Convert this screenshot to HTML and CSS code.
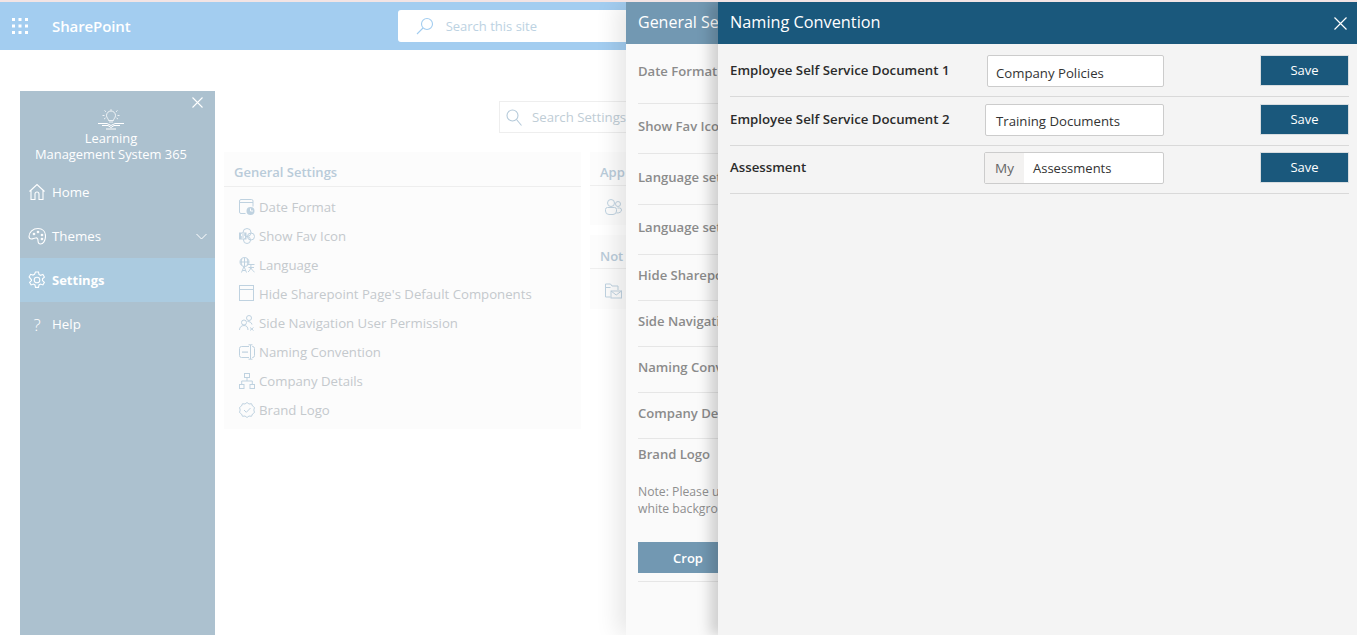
FILE: index.html
```html
<!DOCTYPE html>
<html lang="en">
<head>
<meta charset="utf-8">
<title>Naming Convention</title>
<link rel="stylesheet" href="styles.css">
</head>
<body>
<header class="suite">
  <svg class="waffle" width="16" height="16" viewBox="0 0 16 16" fill="#fff"><rect x="0" y="0" width="3" height="3"/><rect x="6.500" y="0" width="3" height="3"/><rect x="13" y="0" width="3" height="3"/><rect x="0" y="6.500" width="3" height="3"/><rect x="6.500" y="6.500" width="3" height="3"/><rect x="13" y="6.500" width="3" height="3"/><rect x="0" y="13" width="3" height="3"/><rect x="6.500" y="13" width="3" height="3"/><rect x="13" y="13" width="3" height="3"/></svg>
  <span class="brand">SharePoint</span>
  <div class="sitesearch">
    <svg width="18" height="18" viewBox="0 0 18 18" fill="none" stroke="#a3cdf0" stroke-width="1.100"><circle cx="11" cy="7" r="5.500"/><path d="M7 11L1 17"/></svg>
    <span>Search this site</span>
  </div>
</header>

<main class="page">
  <nav class="sidenav">
    <svg class="navclose" width="11" height="11" viewBox="0 0 11 11" stroke="#fff" stroke-width="1.100"><path d="M.5.500l10 10M10.500.500l-10 10"/></svg>
    <div class="logo">
      <svg width="28" height="21" viewBox="0 0 28 21" fill="none" stroke="#fff" stroke-width=".8"><path d="M11.500 11.500c0-2-2-2.500-2-5a4.500 4.500 0 0 1 9 0c0 2.500-2 3-2 5zM12 13h4M14 .2v1.500M7.500 1.500l1.500 1.300M20.500 1.500L19 2.800M5.500 6.500h2M20.500 6.500h2M7 10l1.500-1M21 10l-1.500-1"/><path stroke-width="1" d="M1 14.500h9l4 2 4-2h9M5 16.500h6l3 2 3-2h6M9 20h10"/></svg>
      <span>Learning</span>
      <span>Management System 365</span>
    </div>
    <a class="navitem">
      <svg width="18" height="18" viewBox="0 0 18 18" fill="none" stroke="#fff" stroke-width="1.100"><path d="M1.500 8.500L9 1.500l7.500 7M3 7.500V16.500h4V11a2 2 0 0 1 4 0v5.500h4V7.500"/></svg>
      <span>Home</span>
    </a>
    <a class="navitem">
      <svg width="18" height="18" viewBox="0 0 18 18" fill="none" stroke="#fff" stroke-width="1.100"><path d="M1 9.500C1 5 5 1.500 10 1.500c4.500 0 7.500 3 7.500 7.500 0 5-2.500 8-5 8-2 0-2.500-1.500-2.500-3.500 0-2-1-3-2.500-2.500C6 11 5 12 3.500 12 2 12 1 11 1 9.500z"/><circle cx="6" cy="7" r=".8"/><circle cx="10" cy="5" r=".8"/><circle cx="14" cy="8" r=".8"/><circle cx="14" cy="12" r=".8"/></svg>
      <span>Themes</span>
      <svg class="chev" width="11" height="7" viewBox="0 0 11 7" fill="none" stroke="#fff" stroke-width="1"><path d="M.5 1l5 5 5-5"/></svg>
    </a>
    <a class="navitem active">
      <svg width="18" height="18" viewBox="0 0 18 18" fill="none" stroke="#fff" stroke-width="1.100"><circle cx="9" cy="9" r="2.800"/><path d="M7.500 1h3l.5 2.500 1.500.8 2.400-.8 1.500 2.600-1.900 1.700v1.800l1.900 1.700-1.500 2.600-2.400-.8-1.500.8-.5 2.500h-3l-.5-2.500-1.500-.8-2.400.8-1.500-2.600 1.900-1.700V8.800L1.100 5.900l1.500-2.600 2.400.8 1.500-.8z"/></svg>
      <span>Settings</span>
    </a>
    <a class="navitem">
      <span class="helpmark">?</span>
      <span>Help</span>
    </a>
  </nav>

  <section class="content">
    <div class="searchrow">
      <div class="settingsearch">
        <svg width="16" height="17" viewBox="0 0 16 17" fill="none" stroke="#b5cada" stroke-width="1.100"><circle cx="6.500" cy="6.500" r="5.500"/><path d="M10.500 10.500l5 6"/></svg>
        <span>Search Settings</span>
      </div>
    </div>
    <div class="cards">
      <div class="card general">
        <h3>General Settings</h3>
        <ul>
          <li><svg class="ic" width="16" height="16" viewBox="0 0 16 16"><path d="M6.500 14.500H2a1.500 1.500 0 0 1-1.500-1.500V2A1.500 1.500 0 0 1 2 .5h10.500A1.500 1.500 0 0 1 14 2v5.500M.5 3.500H14"/><circle class="solid" cx="11.500" cy="12" r="4"/><path class="cut" d="M11.500 9.500V12h2.500"/></svg><span>Date Format</span></li>
          <li><svg class="ic" width="16" height="16" viewBox="0 0 16 16"><circle cx="8" cy="4.500" r="4"/><circle cx="12" cy="8.500" r="3.500"/><circle cx="8" cy="12" r="3.500"/><rect class="solid" x="0" y="4.500" width="7.500" height="7"/><path class="cut" d="M5.500 6H2.500v2h3v2h-3"/></svg><span>Show Fav Icon</span></li>
          <li><svg class="ic" width="16" height="16" viewBox="0 0 16 16"><circle cx="5.500" cy="5" r="4.500"/><path d="M1 5h9M5.500.5v9M3 1.500c-1 2-1 5 0 7M8 1.500c1 2 1 5 0 7M2.500 15.500l2.500-6 2.500 6M3.500 13.500h3M9 7.500h6.500M12 7.500c0 4-1 6-3 7.500M12 11c1 2 2 3 3.500 4M9.500 10.500h5.500"/></svg><span>Language</span></li>
          <li><svg class="ic" width="16" height="17" viewBox="0 0 16 17"><rect x=".5" y=".5" width="14" height="15"/><path d="M.5 4.500h14"/></svg><span>Hide Sharepoint Page's Default Components</span></li>
          <li><svg class="ic" width="16" height="16" viewBox="0 0 16 16"><circle cx="10" cy="3" r="2.500"/><circle cx="5" cy="7.500" r="2.500"/><path d="M.5 15c0-3 2-4.500 4.500-4.500S9 12 9 15M8.500 6.500c1.500 0 4 .5 4.500 3M11 12.500l3.500 3M14.500 12.500l-3.500 3"/></svg><span>Side Navigation User Permission</span></li>
          <li><svg class="ic" width="16" height="16" viewBox="0 0 16 16"><path d="M10 2.500H2.500a2 2 0 0 0-2 2v7a2 2 0 0 0 2 2H10M13 2.500h.5a2 2 0 0 1 2 2v7a2 2 0 0 1-2 2H13M11.500 1v14M9.500 .8h4M9.500 15.200h4"/><rect class="solid" x="3" y="7.500" width="6" height="1.200"/></svg><span>Naming Convention</span></li>
          <li><svg class="ic" width="16" height="16" viewBox="0 0 16 16"><rect x="5.500" y=".5" width="5" height="4"/><rect x=".5" y="11.500" width="4.500" height="4"/><rect x="11" y="11.500" width="4.500" height="4"/><path d="M8 4.500v3.500M2.700 11.500V8h10.600v3.500"/></svg><span>Company Details</span></li>
          <li><svg class="ic" width="16" height="16" viewBox="0 0 16 16"><path d="M8 .5l2 1.500 2.500-.3 1 2.300 2 1.500-.7 2.500.7 2.500-2 1.500-1 2.300-2.500-.3L8 15.500 6 14l-2.500.3-1-2.300-2-1.500L1.200 8 .5 5.500l2-1.500 1-2.300L6 2z"/><path d="M5 8l2.300 2.300L11.500 6"/></svg><span>Brand Logo</span></li>
        </ul>
      </div>
      <div class="sidecol">
        <div class="card narrow n1">
          <h3>App</h3>
          <ul><li><svg class="ic" width="17" height="16" viewBox="0 0 17 16"><circle cx="6" cy="4" r="3.500"/><circle cx="13" cy="5" r="2.500"/><path d="M.5 12v-1.500a2 2 0 0 1 2-2h7a2 2 0 0 1 2 2V12a3.500 3.500 0 0 1-3.500 3.500H4A3.500 3.500 0 0 1 .5 12zM12.500 9h2a2 2 0 0 1 2 2c0 2-2 3-5 3"/></svg></li></ul>
        </div>
        <div class="card narrow n2">
          <h3>Not</h3>
          <ul><li><svg class="ic" width="17" height="16" viewBox="0 0 17 16"><path d="M5.500 14H.5V1h5l1.500 2h6v4M.5 4.500h5"/><rect x="6" y="8" width="10.500" height="7"/><path d="M6 8l5.200 4L16.500 8"/></svg></li></ul>
        </div>
      </div>
    </div>
  </section>
</main>

<aside class="panel first">
  <div class="panelhead"><span>General Settings</span></div>
  <div class="panelbody">
    <div class="prow r1">Date Format</div>
    <div class="prow r2">Show Fav Icon</div>
    <div class="prow r2b">Language settings</div>
    <div class="prow r2">Language settings</div>
    <div class="prow r3">Hide Sharepoint Page's</div>
    <div class="prow r3">Side Navigation</div>
    <div class="prow r3">Naming Convention</div>
    <div class="prow r3">Company Details</div>
    <div class="prow last">Brand Logo</div>
    <p class="note">Note: Please upload the logo on a<br>white background</p>
    <div class="cropwrap"><button class="crop">Crop</button></div>
  </div>
</aside>

<aside class="panel second">
  <div class="head2">
    <span>Naming Convention</span>
    <svg width="13" height="13" viewBox="0 0 13 13" stroke="#fff" stroke-width="1.200"><path d="M.5.500l12 12M12.500.500l-12 12"/></svg>
  </div>
  <div class="formbody">
    <div class="frow">
      <label>Employee Self Service Document 1</label>
      <div class="field w1"><span class="val v1">Company Policies</span></div>
      <button class="save">Save</button>
    </div>
    <div class="frow mid">
      <label>Employee Self Service Document 2</label>
      <div class="field w2"><span class="val v2">Training Documents</span></div>
      <button class="save">Save</button>
    </div>
    <div class="frow">
      <label>Assessment</label>
      <div class="field w3"><span class="prefix">My</span><span class="val">Assessments</span></div>
      <button class="save">Save</button>
    </div>
  </div>
</aside>
</body>
</html>
```

FILE: styles.css
```css
* { box-sizing: border-box; }
html, body { margin: 0; height: 100%; overflow: hidden; }
body {
  position: relative;
  width: 1357px;
  height: 635px;
  background: #fff;
  font-family: "Open Sans", "Noto Sans", "Liberation Sans", sans-serif;
  color: #333;
  border-top: 2px solid #f3e4e4;
}
ul { list-style: none; margin: 0; padding: 0; }
h3 { margin: 0; }

.suite {
  height: 48px;
  background: #a3cdf0;
  display: flex;
  align-items: center;
  color: #fff;
}
.waffle { margin-left: 12px; margin-top: -1px; }
.brand { margin-left: 24px; font-size: 15px; font-weight: 600; letter-spacing: -.1px; }
.sitesearch {
  margin-left: 267px;
  width: 290px;
  height: 32px;
  background: #fff;
  border-radius: 3px;
  display: flex;
  align-items: center;
  padding-left: 18px;
  gap: 12px;
  font-size: 13px;
  color: #bcd2e2;
}

.page {
  display: flex;
  padding: 41px 0 0 20px;
  height: 585px;
}
.sidenav {
  position: relative;
  width: 195px;
  background: #acc1cf;
  color: #fff;
  font-size: 13.3px;
  display: flex;
  flex-direction: column;
}
.navclose { position: absolute; top: 6px; right: 12px; }
.logo {
  display: flex;
  flex-direction: column;
  align-items: center;
  padding: 18px 13px 0 0;
  height: 79px;
  font-size: 12.9px;
  line-height: 16px;
  text-align: center;
}
.navitem {
  height: 44px;
  display: flex;
  align-items: center;
  padding-left: 8px;
  gap: 6px;
  position: relative;
}
.navitem.active { background: #abcbe0; font-weight: 700; font-size: 13px; }
.navitem svg:first-child { flex: none; }
.chev { position: absolute; right: 8px; top: 19px; }
.helpmark { width: 18px; text-align: center; font-size: 17px; font-weight: 300; }

.content { margin-left: 9px; flex: 1; }
.searchrow { padding: 10px 0 0 275px; height: 61px; }
.settingsearch {
  width: 160px;
  height: 32px;
  border: 1px solid #eee;
  display: flex;
  align-items: center;
  padding-left: 6px;
  gap: 10px;
  font-size: 13.2px;
  color: #c0cdd6;
  white-space: nowrap;
}
.cards { display: flex; gap: 9px; }
.card { background: #fcfcfc; }
.card h3 {
  font-size: 13px;
  font-weight: 600;
  color: #b9cbd9;
  padding: 11px 0 0 10px;
  height: 34px;
  border-bottom: 1px solid #eeeeee;
}
.general { width: 357px; height: 277px; }
.general h3 { height: 35px; }
.general ul { padding: 5px 0 0 15px; }
.general li {
  height: 29px;
  display: flex;
  align-items: center;
  gap: 4px;
  font-size: 13.2px;
  color: #c4c9cd;
  white-space: nowrap;
}
.ic { flex: none; fill: none; stroke: #bfd2e0; stroke-width: 1; }
.ic .solid { fill: #bfd2e0; stroke: none; }
.ic .cut { stroke: #fcfcfc; }
.sidecol { display: flex; flex-direction: column; gap: 10px; }
.narrow { width: 80px; }
.n1 { height: 73px; }
.n2 { height: 74px; }
.n1 ul { padding: 12px 0 0 15px; }
.n2 ul { padding: 13px 0 0 15px; }
.n2 h3 { padding-top: 12px; }

.panel { position: absolute; top: 0; bottom: 0; }
.first {
  left: 626px;
  width: 92px;
  overflow: hidden;
  background: #fafafa;
  box-shadow: -8px 0 22px rgba(0,0,0,.1);
}
.panelhead {
  height: 42px;
  background: #7298b2;
  color: #fff;
  font-size: 16px;
  padding: 9px 0 0 12px;
  white-space: nowrap;
}
.panelbody { padding: 0 12px; color: #8b8b8b; font-size: 13.1px; font-weight: 600; white-space: nowrap; }
.prow { border-bottom: 1px solid #e6e6e6; width: 88px; }
.r1 { height: 60px; padding-top: 18px; }
.r2 { height: 50px; padding-top: 13px; }
.r2b { height: 51px; padding-top: 14px; }
.r3 { height: 46px; padding-top: 11px; }
.last { border: 0; padding-top: 6px; }
.note { margin: 20px 0 0; font-size: 12.2px; font-weight: 400; line-height: 17px; color: #8f8f8f; }
.cropwrap { margin-top: 25px; border-bottom: 1px solid #e6e6e6; width: 600px; height: 40px; }
.crop {
  display: block;
  width: 100px;
  height: 31px;
  border: 0;
  background: #7298b2;
  color: #fff;
  font: 600 13px "Open Sans", sans-serif;
}

.second {
  left: 718px;
  right: 0;
  background: #f4f4f4;
  box-shadow: -8px 0 12px rgba(0,0,0,.17);
}
.head2 {
  height: 42px;
  background: #1a587c;
  color: #fff;
  font-size: 16.3px;
  display: flex;
  align-items: center;
  justify-content: space-between;
  padding: 0 10px 2px 12px;
}
.head2 svg { margin-top: 2px; }
.formbody { padding: 4.5px 8px 0 12px; }
.frow {
  position: relative;
  height: 48.5px;
  border-bottom: 1px solid #d9d9d9;
  display: flex;
  align-items: center;
  font-size: 13.25px;
}
label { font-weight: 600; color: #2b2b2b; margin-top: -5px; white-space: nowrap; }
.mid label { margin-top: -3px; }
.field {
  position: absolute;
  right: 185px;
  top: 6.5px;
  height: 32px;
  background: #fff;
  border: 1px solid #ccc;
  border-radius: 2px;
  display: flex;
  align-items: center;
  font-size: 13.2px;
  color: #333;
}
.v1 { padding-top: 3px; }
.v2 { padding-top: 3px; }
.w1 { width: 177px; padding-left: 8px; }
.w2 { width: 179px; padding-left: 10px; }
.w3 { width: 180px; font-size: 13px; }
.prefix { width: 39px; height: 100%; background: #f3f2f1; color: #666; font-size: 13.5px; display: flex; align-items: center; justify-content: center; margin-right: 9px; }
.save {
  position: absolute;
  right: 0;
  top: 6.5px;
  width: 89px;
  height: 31px;
  background: #1a587c;
  border: 1px solid #d8dde0;
  color: #fff;
  font: 400 13px "Open Sans", sans-serif;
  padding: 0 0 2px;
}
.mid .save { padding: 0; }
```
